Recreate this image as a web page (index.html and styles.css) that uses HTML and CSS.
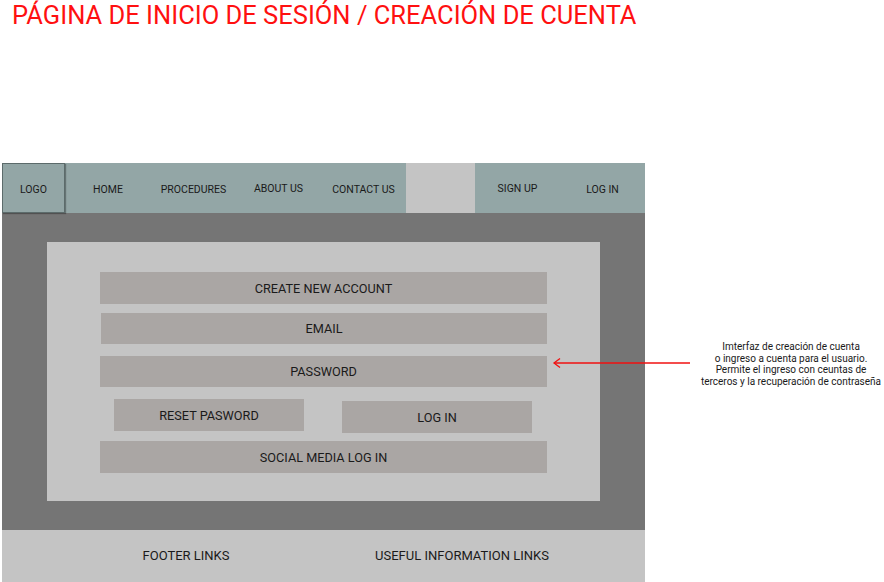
FILE: index.html
```html
<!DOCTYPE html>
<html lang="es">
<head>
<meta charset="utf-8">
<title>Página de inicio de sesión</title>
<link rel="stylesheet" href="styles.css">
</head>
<body>
<div class="page">
  <h1 class="title">PÁGINA DE INICIO DE SESIÓN / CREACIÓN DE CUENTA</h1>

  <div class="wire">
    <nav class="nav">
      <div class="logo">LOGO</div>
      <div class="nav-item wide">HOME</div>
      <div class="nav-item">PROCEDURES</div>
      <div class="nav-item up">ABOUT US</div>
      <div class="nav-item">CONTACT US</div>
      <div class="nav-gap"></div>
      <div class="nav-item up">SIGN UP</div>
      <div class="nav-item">LOG IN</div>
    </nav>

    <main class="main">
      <section class="panel">
        <div class="btn b-create">CREATE NEW ACCOUNT</div>
        <div class="btn b-email">EMAIL</div>
        <div class="btn b-pass">PASSWORD</div>
        <div class="btn-row">
          <div class="btn small b-reset">RESET PASWORD</div>
          <div class="btn small b-login">LOG IN</div>
        </div>
        <div class="btn b-social">SOCIAL MEDIA LOG IN</div>
      </section>
    </main>

    <footer class="footer">
      <div class="foot-cell first">FOOTER LINKS</div>
      <div class="foot-cell second">USEFUL INFORMATION LINKS</div>
    </footer>
  </div>

  <svg class="arrow" width="140" height="12" viewBox="0 0 140 12">
    <line x1="2" y1="6" x2="138" y2="6" stroke="#f01010" stroke-width="1.3"/>
    <path d="M8 1.5 L2 6 L8 10.5" fill="none" stroke="#f01010" stroke-width="1.3"/>
  </svg>
  <p class="note">Imterfaz de creación de cuenta<br>o ingreso a cuenta para el usuario.<br>Permite el ingreso con ceuntas de<br>terceros y la recuperación de contraseña</p>
</div>
</body>
</html>
```

FILE: styles.css
```css
html, body {
  margin: 0;
  padding: 0;
  background: #ffffff;
  overflow: hidden;
}

body {
  font-family: Roboto, "Liberation Sans", sans-serif;
  color: #1a1a1a;
}

.page {
  position: relative;
  width: 884px;
  height: 582px;
}

.title {
  margin: 0;
  padding-left: 12px;
  font-size: 25.5px;
  line-height: 30px;
  font-weight: 400;
  color: #ff1010;
  white-space: nowrap;
}

.wire {
  margin-top: 133px;
  margin-left: 2px;
  width: 643px;
  display: flex;
  flex-direction: column;
}

/* NAV */
.nav {
  display: flex;
  height: 50px;
  background: #93a6a6;
  font-size: 10.5px;
}

.logo {
  width: 61px;
  height: 46px;
  padding-top: 2px;
  border: 1px solid #5c6b6b;
  box-shadow: 1px 1px 1px rgba(0, 0, 0, 0.3);
  display: flex;
  align-items: center;
  justify-content: center;
  position: relative;
  z-index: 1;
}

.nav-item {
  width: 85px;
  display: flex;
  align-items: center;
  justify-content: center;
  padding-top: 3px;
  box-sizing: border-box;
}

.nav-item.wide {
  width: 86px;
}

.nav-item.up {
  padding-top: 1px;
}

.nav-gap {
  width: 69px;
  background: #c4c4c4;
}

/* MAIN */
.main {
  height: 317px;
  background: #757575;
  padding: 29px 45px;
  box-sizing: border-box;
}

.panel {
  height: 259px;
  background: #c4c4c4;
  padding: 30px 53px 0;
  box-sizing: border-box;
  display: flex;
  flex-direction: column;
}

.btn {
  height: 31px;
  background: #aaa6a4;
  display: flex;
  align-items: center;
  justify-content: center;
  font-size: 12.7px;
}

.b-create {
  height: 32px;
}

.b-email {
  margin-top: 9px;
  margin-left: 1px;
}

.b-pass {
  margin-top: 12px;
}

.btn-row {
  margin-top: 12px;
  padding: 0 15px 0 14px;
  display: flex;
  justify-content: space-between;
  align-items: flex-start;
}

.btn.small {
  width: 190px;
  height: 32px;
}

.b-login {
  margin-top: 2px;
}

.b-social {
  margin-top: 8px;
  height: 32px;
}

/* FOOTER */
.footer {
  height: 52px;
  background: #c4c4c4;
  display: flex;
  align-items: center;
  padding-bottom: 2px;
  box-sizing: border-box;
  font-size: 13px;
}

.foot-cell {
  width: 200px;
  text-align: center;
}

.foot-cell.first {
  margin-left: 84px;
}

.foot-cell.second {
  margin-left: 76px;
}

/* ANNOTATION */
.arrow {
  position: absolute;
  left: 552px;
  top: 357px;
}

.note {
  position: absolute;
  left: 689px;
  top: 341px;
  width: 204px;
  margin: 0;
  font-size: 10px;
  line-height: 11.7px;
  text-align: center;
  color: #1a1a1a;
  white-space: nowrap;
}
```
